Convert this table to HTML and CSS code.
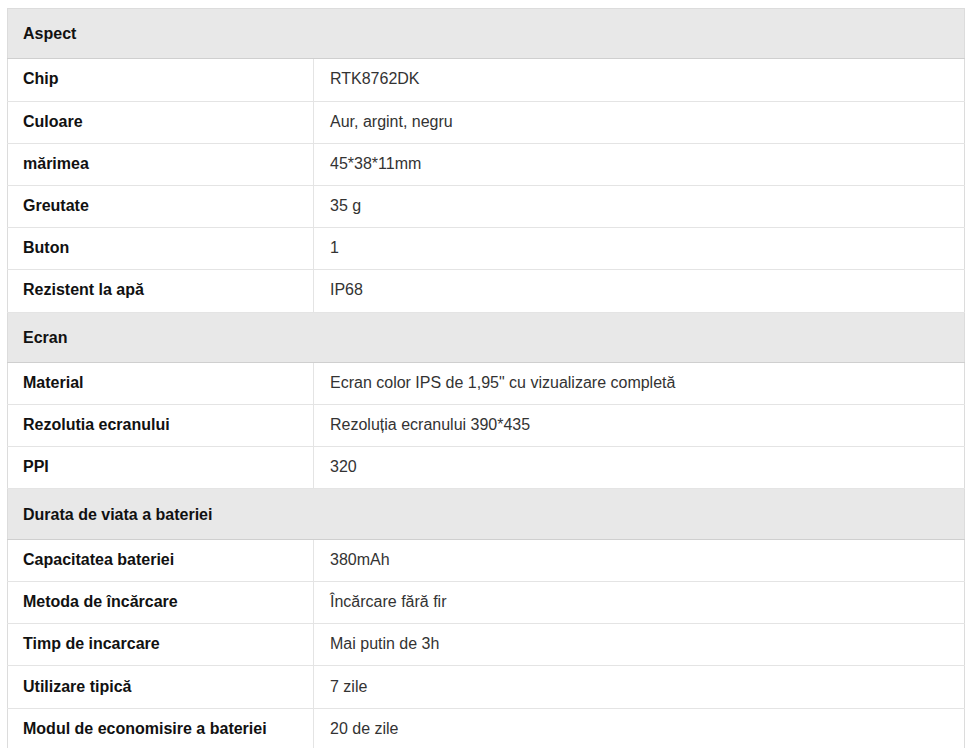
FILE: index.html
```html
<!DOCTYPE html>
<html lang="ro">
<head>
<meta charset="utf-8">
<link rel="stylesheet" href="styles.css">
</head>
<body>
<table class="spec">
  <colgroup>
    <col class="col-label">
    <col class="col-value">
  </colgroup>
  <tbody>
    <tr class="group"><th colspan="2">Aspect</th></tr>
    <tr><td class="label">Chip</td><td class="value">RTK8762DK</td></tr>
    <tr><td class="label">Culoare</td><td class="value">Aur, argint, negru</td></tr>
    <tr><td class="label">mărimea</td><td class="value">45*38*11mm</td></tr>
    <tr><td class="label">Greutate</td><td class="value">35 g</td></tr>
    <tr><td class="label">Buton</td><td class="value">1</td></tr>
    <tr><td class="label">Rezistent la apă</td><td class="value">IP68</td></tr>
    <tr class="group"><th colspan="2">Ecran</th></tr>
    <tr><td class="label">Material</td><td class="value">Ecran color IPS de 1,95" cu vizualizare completă</td></tr>
    <tr><td class="label">Rezolutia ecranului</td><td class="value">Rezoluția ecranului 390*435</td></tr>
    <tr><td class="label">PPI</td><td class="value">320</td></tr>
    <tr class="group"><th colspan="2">Durata de viata a bateriei</th></tr>
    <tr><td class="label">Capacitatea bateriei</td><td class="value">380mAh</td></tr>
    <tr><td class="label">Metoda de încărcare</td><td class="value">Încărcare fără fir</td></tr>
    <tr><td class="label">Timp de incarcare</td><td class="value">Mai putin de 3h</td></tr>
    <tr><td class="label">Utilizare tipică</td><td class="value">7 zile</td></tr>
    <tr><td class="label">Modul de economisire a bateriei</td><td class="value">20 de zile</td></tr>
  </tbody>
</table>
</body>
</html>
```
FILE: styles.css
```css
html, body {
  margin: 0;
  padding: 0;
  background: #ffffff;
}
body {
  padding: 8px 10px 8px 7px;
  font-family: "Liberation Sans", Arial, sans-serif;
  font-size: 16px;
}
.spec {
  width: 958px;
  border-collapse: collapse;
  table-layout: fixed;
  border: 1px solid #dcdcdc;
}
.col-label {
  width: 306px;
}
.spec td, .spec th {
  text-align: left;
  vertical-align: middle;
  line-height: 20px;
}
.group th {
  background: #e8e8e8;
  color: #111111;
  font-weight: bold;
  height: 50.4px;
  padding: 1px 15px 0;
  border-bottom: 1px solid #cfcfcf;
  border-top: 1px solid #dcdcdc;
  box-sizing: border-box;
}
.spec td {
  height: 42.2px;
  padding: 0 16px 1px 15px;
  border-bottom: 1px solid #e4e4e4;
  box-sizing: border-box;
}
.label {
  font-weight: bold;
  color: #111111;
  border-right: 1px solid #e4e4e4;
}
.spec td.value {
  color: #333333;
  padding-left: 16px;
}
```
